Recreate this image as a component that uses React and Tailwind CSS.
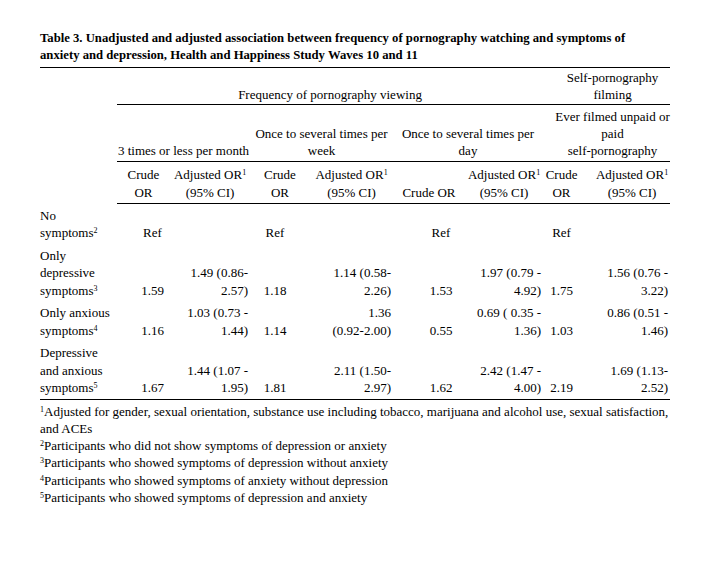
import React from 'react';

// Linhas da tabela: rótulo em várias linhas + valores por coluna
const ROWS = [
    {
        label: ['No', 'symptoms', '2'],
        values: ['Ref', '', 'Ref', '', 'Ref', '', 'Ref', ''],
    },
    {
        label: ['Only', 'depressive', 'symptoms', '3'],
        values: [
            '1.59', ['1.49 (0.86-', '2.57)'],
            '1.18', ['1.14 (0.58-', '2.26)'],
            '1.53', ['1.97 (0.79 -', '4.92)'],
            '1.75', ['1.56 (0.76 -', '3.22)'],
        ],
    },
    {
        label: ['Only anxious', 'symptoms', '4'],
        values: [
            '1.16', ['1.03 (0.73 -', '1.44)'],
            '1.14', ['1.36', '(0.92-2.00)'],
            '0.55', ['0.69 ( 0.35 -', '1.36)'],
            '1.03', ['0.86 (0.51 -', '1.46)'],
        ],
    },
    {
        label: ['Depressive', 'and anxious', 'symptoms', '5'],
        values: [
            '1.67', ['1.44 (1.07 -', '1.95)'],
            '1.81', ['2.11 (1.50-', '2.97)'],
            '1.62', ['2.42 (1.47 -', '4.00)'],
            '2.19', ['1.69 (1.13-', '2.52)'],
        ],
    },
];

// Deslocamento dos valores nas colunas "Crude" (o Word não centraliza igual ao cabeçalho)
const CRUDE_PAD = ['pl-[18px]', 'pr-[10px]', 'pl-[24px]', ''];

const FOOTNOTES = [
    ['2', 'Participants who did not show symptoms of depression or anxiety'],
    ['3', 'Participants who showed symptoms of depression without anxiety'],
    ['4', 'Participants who showed symptoms of anxiety without depression'],
    ['5', 'Participants who showed symptoms of depression and anxiety'],
];

function Sup({ children }) {
    return <sup className="text-[8px]">{children}</sup>;
}

function Lines({ lines }) {
    return lines.map((l, i) => (
        <React.Fragment key={i}>
            {i > 0 && <br />}
            {l}
        </React.Fragment>
    ));
}

function AdjHeader() {
    return (
        <>
            Adjusted OR<Sup>1</Sup>
            <br />
            (95% CI)
        </>
    );
}

export default function App() {
    const cell = 'align-bottom p-0';
    const head = 'align-bottom p-0 text-center border-b border-black whitespace-nowrap';

    return (
        <div className="min-h-[572px] w-[720px] bg-white text-black font-[family-name:'Liberation_Serif','Times_New_Roman',serif] text-[13px]">
            <div className="pl-[40px] pt-[30px] w-[700px]">
                <h1 className="font-bold text-[12.7px] leading-[17px] mb-[3px] w-[600px]">
                    Table 3. Unadjusted and adjusted association between frequency of pornography watching and symptoms of
                    anxiety and depression, Health and Happiness Study Waves 10 and 11
                </h1>

                <table className="table-fixed border-collapse w-[630px]">
                    <colgroup>
                        <col className="w-[77px]" />
                        <col className="w-[53px]" />
                        <col className="w-[80px]" />
                        <col className="w-[60px]" />
                        <col className="w-[83px]" />
                        <col className="w-[72px]" />
                        <col className="w-[78px]" />
                        <col className="w-[37px]" />
                        <col className="w-[90px]" />
                    </colgroup>
                    <thead className="leading-[17px]">
                        {/* grupo principal */}
                        <tr className="border-t border-black">
                            <td className={cell}></td>
                            <td colSpan={6} className={`${head} pb-[1px]`}>
                                Frequency of pornography viewing
                            </td>
                            <td colSpan={2} className={`${head} pt-[1px] pb-[1px] pl-[12px]`}>
                                Self-pornography
                                <br />
                                filming
                            </td>
                        </tr>
                        {/* subgrupos */}
                        <tr>
                            <td className={cell}></td>
                            <td colSpan={2} className={`${head} pb-[2px]`}>
                                3 times or less per month
                            </td>
                            <td colSpan={2} className={`${head} pb-[2px]`}>
                                Once to several times per
                                <br />
                                week
                            </td>
                            <td colSpan={2} className={`${head} pb-[2px]`}>
                                Once to several times per
                                <br />
                                day
                            </td>
                            <td colSpan={2} className={`${head} pt-[3px] pb-[2px] pl-[12px]`}>
                                Ever filmed unpaid or
                                <br />
                                paid
                                <br />
                                self-pornography
                            </td>
                        </tr>
                        {/* cabeçalhos das colunas */}
                        <tr className="leading-[17.5px]">
                            <td className={cell}></td>
                            <td className={`${head} pt-[4px] pb-[2px]`}>Crude<br />OR</td>
                            <td className={`${head} pb-[2px]`}><AdjHeader /></td>
                            <td className={`${head} pb-[2px]`}>Crude<br />OR</td>
                            <td className={`${head} pb-[2px]`}><AdjHeader /></td>
                            <td className={`${head} pb-[2px]`}>Crude OR</td>
                            <td className={`${head} pb-[2px]`}><AdjHeader /></td>
                            <td className={`${head} pb-[2px]`}>Crude<br />OR</td>
                            <td className={`${head} pb-[2px] pl-[14px]`}><AdjHeader /></td>
                        </tr>
                    </thead>
                    <tbody className="leading-[17.5px]">
                        {ROWS.map((row, r) => {
                            const last = r === ROWS.length - 1;
                            const label = row.label.slice(0, -1);
                            const sup = row.label[row.label.length - 1];
                            return (
                                <tr key={r} className={last ? 'border-b border-black' : ''}>
                                    <td className={`${cell} pt-[3px] pb-[2px]`}>
                                        <Lines lines={label} />
                                        <Sup>{sup}</Sup>
                                    </td>
                                    {row.values.map((v, i) =>
                                        i % 2 === 0 ? (
                                            <td key={i} className={`${cell} text-center pb-[2px] ${CRUDE_PAD[i / 2]}`}>
                                                {v}
                                            </td>
                                        ) : (
                                            <td key={i} className={`${cell} text-right pr-[2px] pb-[2px] whitespace-nowrap`}>
                                                {Array.isArray(v) ? <Lines lines={v} /> : v}
                                            </td>
                                        )
                                    )}
                                </tr>
                            );
                        })}
                    </tbody>
                </table>

                {/* notas de rodapé */}
                <div className="leading-[17.3px] mt-[3px] w-[650px]">
                    <p>
                        <Sup>1</Sup>Adjusted for gender, sexual orientation, substance use including tobacco, marijuana and
                        alcohol use, sexual satisfaction, and ACEs
                    </p>
                    {FOOTNOTES.map(([n, text]) => (
                        <p key={n}>
                            <Sup>{n}</Sup>
                            {text}
                        </p>
                    ))}
                </div>
            </div>
        </div>
    );
}
